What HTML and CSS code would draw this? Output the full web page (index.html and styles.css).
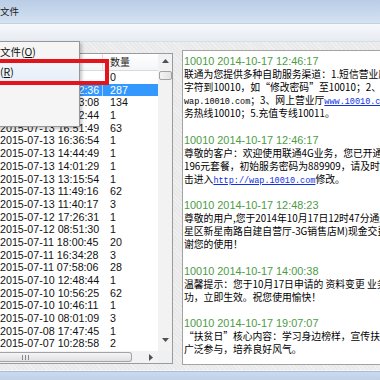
FILE: index.html
```html
<!DOCTYPE html>
<html lang="zh-CN">
<head>
<meta charset="utf-8">
<title>短信</title>
<link rel="stylesheet" href="styles.css">
</head>
<body>
<div class="win">
  <div class="title"><span class="title-text">文件</span></div>
  <div class="menubar"></div>
  <div class="client">
    <div class="list">
      <div class="hdr">
        <div class="hc1"></div>
        <div class="hc2">数量</div>
      </div>
      <div class="rows">
        <div class="row"><div class="c1"></div><div class="c2">0</div></div>
        <div class="row sel"><div class="c1">2015-07-14 10:12:36</div><div class="c2">287</div></div>
        <div class="row"><div class="c1">2015-07-14 08:23:08</div><div class="c2">134</div></div>
        <div class="row"><div class="c1">2015-07-13 18:52:44</div><div class="c2">1</div></div>
        <div class="row"><div class="c1">2015-07-13 16:51:49</div><div class="c2">63</div></div>
        <div class="row"><div class="c1">2015-07-13 16:36:54</div><div class="c2">1</div></div>
        <div class="row"><div class="c1">2015-07-13 14:44:49</div><div class="c2">1</div></div>
        <div class="row"><div class="c1">2015-07-13 14:01:29</div><div class="c2">1</div></div>
        <div class="row"><div class="c1">2015-07-13 13:15:54</div><div class="c2">1</div></div>
        <div class="row"><div class="c1">2015-07-13 11:49:16</div><div class="c2">62</div></div>
        <div class="row"><div class="c1">2015-07-13 11:40:17</div><div class="c2">3</div></div>
        <div class="row"><div class="c1">2015-07-12 17:26:31</div><div class="c2">1</div></div>
        <div class="row"><div class="c1">2015-07-12 08:51:30</div><div class="c2">1</div></div>
        <div class="row"><div class="c1">2015-07-11 18:00:45</div><div class="c2">20</div></div>
        <div class="row"><div class="c1">2015-07-11 16:34:28</div><div class="c2">3</div></div>
        <div class="row"><div class="c1">2015-07-11 07:58:06</div><div class="c2">28</div></div>
        <div class="row"><div class="c1">2015-07-10 12:48:44</div><div class="c2">1</div></div>
        <div class="row"><div class="c1">2015-07-10 10:56:25</div><div class="c2">62</div></div>
        <div class="row"><div class="c1">2015-07-10 10:46:11</div><div class="c2">1</div></div>
        <div class="row"><div class="c1">2015-07-10 08:01:09</div><div class="c2">3</div></div>
        <div class="row"><div class="c1">2015-07-08 17:47:45</div><div class="c2">1</div></div>
        <div class="row"><div class="c1">2015-07-07 10:28:58</div><div class="c2">2</div></div>
      </div>
      <div class="vscroll">
        <div class="vbtn up"><svg width="7" height="4" viewBox="0 0 7 4"><path d="M0 4 L3.5 0 L7 4 Z" fill="#505050"/></svg></div>
        <div class="vthumb"></div>
        <div class="vtrack"></div>
        <div class="vbtn down"><svg width="7" height="4" viewBox="0 0 7 4"><path d="M0 0 L3.5 4 L7 0 Z" fill="#505050"/></svg></div>
      </div>
      <div class="hscroll">
        <div class="hthumb"><span class="grip"></span><span class="grip"></span><span class="grip"></span></div>
        <div class="htrack"></div>
        <div class="hbtn"><svg width="4" height="7" viewBox="0 0 4 7"><path d="M0 0 L4 3.5 L0 7 Z" fill="#505050"/></svg></div>
      </div>
      <div class="corner"></div>
    </div>
    <div class="panel">
      <div class="ln hd">10010 2014-10-17 12:46:17</div>
      <div class="ln">联通为您提供多种自助服务渠道：1.短信营业厅</div>
      <div class="ln">字符到10010，如“修改密码”至10010；2、手机营业厅</div>
      <div class="ln"><span class="m">wap.10010.com</span>；3、网上营业厅<a class="lk">www.10010.com</a></div>
      <div class="ln">务热线10010；5.充值专线10011。</div>
      <div class="ln">&nbsp;</div>
      <div class="ln hd">10010 2014-10-17 12:46:17</div>
      <div class="ln">尊敬的客户：欢迎使用联通4G业务，您已开通</div>
      <div class="ln">196元套餐，初始服务密码为889909，请及时</div>
      <div class="ln">击进入<a class="lk">http://wap.10010.com</a>修改。</div>
      <div class="ln">&nbsp;</div>
      <div class="ln hd">10010 2014-10-17 12:48:23</div>
      <div class="ln">尊敬的用户,您于2014年10月17日12时47分通过</div>
      <div class="ln">星区新星南路自建自营厅-3G销售店M)现金交费</div>
      <div class="ln">谢您的使用！</div>
      <div class="ln">&nbsp;</div>
      <div class="ln hd">10010 2014-10-17 14:00:38</div>
      <div class="ln">温馨提示：您于10月17日申请的 资料变更 业务</div>
      <div class="ln">功，立即生效。祝您使用愉快！</div>
      <div class="ln">&nbsp;</div>
      <div class="ln hd">10010 2014-10-17 19:07:07</div>
      <div class="ln">“扶贫日”核心内容：学习身边榜样，宣传扶贫</div>
      <div class="ln">广泛参与，培养良好风气。</div>
    </div>
  </div>
  <div class="footer"></div>

  <div class="menu">
    <div class="mi">打开文件(<u>O</u>)</div>
    <div class="mi hot">刷新(<u>R</u>)</div>
  </div>
  <div class="mark"></div>
</div>
</body>
</html>
```

FILE: styles.css
```css
* { box-sizing: border-box; margin: 0; padding: 0; }
html, body { width: 380px; height: 380px; overflow: hidden; }
body { font-family: "Noto Sans CJK SC", sans-serif; background: #ebebeb; color: #000; }

.win { position: relative; width: 380px; height: 380px; overflow: hidden; display: flex; flex-direction: column; }

.title { flex: none; height: 24px; display: flex; align-items: center; background: linear-gradient(#b9cde6, #c9d9ed 60%, #d5e2f1); border-bottom: 1px solid #c2d0e2; font-size: 9.5px; color: #1c1c1c; }
.title-text { line-height: 1; }

.menubar { flex: none; height: 18px; background: linear-gradient(#f6f8fb, #e6ebf2); border-bottom: 1px solid #d9dee5; }

.client { flex: 1; display: flex; align-items: flex-start; background-color: #e9e9e9; background-image: repeating-linear-gradient(45deg, rgba(255,255,255,0.35) 0 1px, transparent 1px 3px); }

.list { flex: none; width: 181px; height: 311px; margin: 11px 0 0 -8px; border: 1px solid #979ca4; background: #fff; display: grid; grid-template-columns: 165px 14px; grid-template-rows: 17px 280px 12px; }

.hdr { grid-column: 1; grid-row: 1; display: flex; background: linear-gradient(#ffffff, #f4f5f7); border-bottom: 1px solid #dadada; font-size: 10px; line-height: 16px; color: #1e1e1e; }
.hc1 { width: 110px; padding-left: 7px; border-right: 1px solid #e0e0e0; }
.hc2 { padding-left: 7px; }

.rows { grid-column: 1; grid-row: 2; overflow: hidden; font-family: "Liberation Sans", Arial, sans-serif; font-size: 10.7px; color: #111; }
.row { display: flex; height: 12.7px; line-height: 12.7px; white-space: nowrap; }
.c1 { width: 110px; flex: none; padding-left: 7px; }
.c2 { padding-left: 7px; }
.row.sel { background: #3399ff; color: #fff; }
.row.sel .c1 { border-right: 1px solid rgba(255,255,255,0.55); }

.vscroll { grid-column: 2; grid-row: 1 / span 2; display: flex; flex-direction: column; background: #f2f2f2; padding-bottom: 4px; }
.vbtn { flex: none; height: 14px; display: flex; align-items: center; justify-content: center; }
.vbtn svg { display: block; }
.vthumb { flex: none; height: 9px; margin: 3px 0 0 1px; border: 1px solid #a3a3a3; border-radius: 2px; background: linear-gradient(90deg, #f4f4f4, #e2e2e2); }
.vtrack { flex: 1; }

.hscroll { grid-column: 1; grid-row: 3; display: flex; background: #f2f2f2; padding-top: 1px; }
.hthumb { flex: none; width: 139px; height: 10px; border: 1px solid #a3a3a3; border-left: none; border-radius: 0 3px 3px 0; background: linear-gradient(#f5f5f5, #e0e0e0); display: flex; align-items: center; gap: 2px; padding-left: 29px; }
.grip { width: 1px; height: 5px; background: #8a8a8a; }
.htrack { flex: 1; }
.hbtn { flex: none; width: 15px; display: flex; align-items: center; justify-content: center; }
.hbtn svg { display: block; }
.corner { grid-column: 2; grid-row: 3; background: #f0f0f0; }

.panel { flex: none; width: 260px; height: 315px; margin: 8px 0 0 9px; border: 1px solid #a3a3a3; background: #fff; padding: 4px 0 0 1px; overflow: hidden; font-size: 9.8px; line-height: 13.1px; color: #000; }
.ln { white-space: nowrap; height: 13.1px; }
.hd { font-family: "Liberation Sans", Arial, sans-serif; font-size: 10.9px; color: #4c9c46; }
.m { font-family: "Liberation Mono", monospace; font-size: 8.5px; }
.lk { font-family: "Liberation Mono", monospace; font-size: 8.5px; color: #1030e0; text-decoration: underline; }

.footer { flex: none; height: 10px; background: linear-gradient(#f7f7f7 0 1px, #a9bdd8 1px 2px, #cbdaee 2px, #bfd1e8); }

.menu { position: absolute; left: -60px; top: 41px; width: 140px; height: 86px; background: #f5f5f5; border: 1px solid #979797; box-shadow: 2px 2px 3px rgba(0,0,0,0.22); font-size: 10.5px; color: #111; }
.mi { height: 20px; line-height: 20px; padding-left: 38px; white-space: nowrap; }
.mi.hot { background: linear-gradient(#f2f6fb, #e6eef8); }

.mark { position: absolute; left: -10px; top: 59px; width: 119px; height: 26px; border: 4px solid #e3141c; }
```
